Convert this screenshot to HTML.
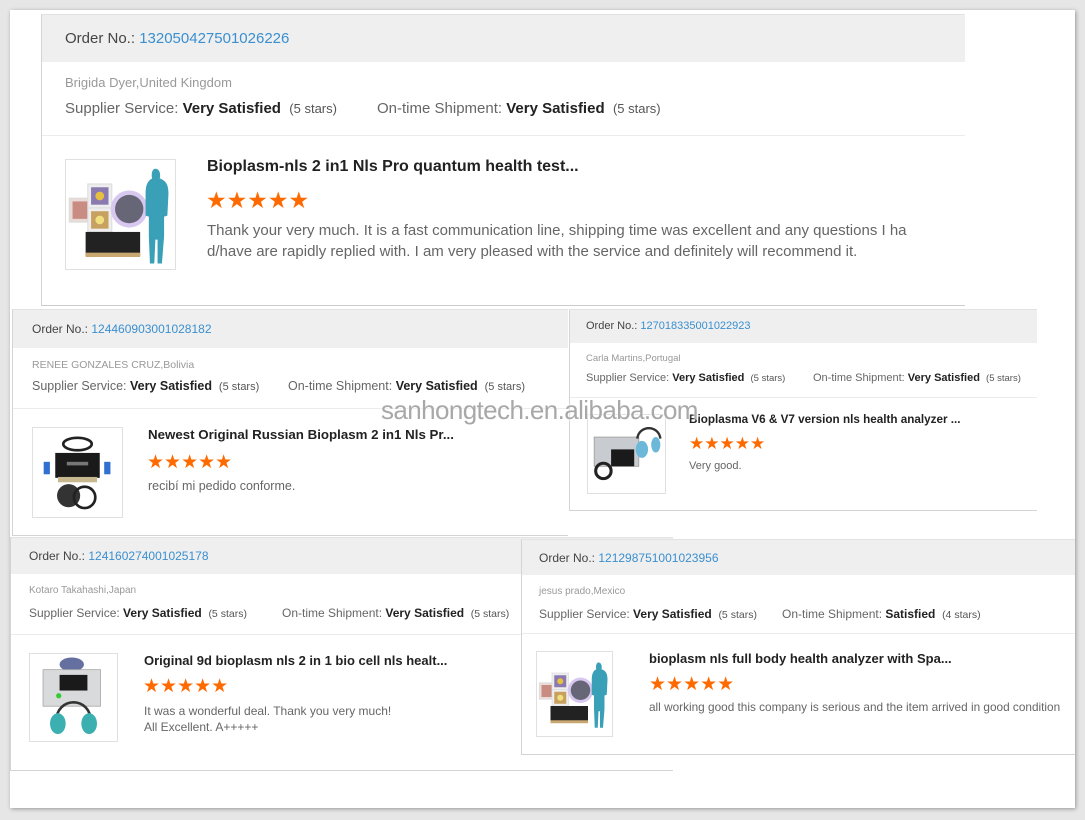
<!DOCTYPE html>
<html><head><meta charset="utf-8"><style>
*{margin:0;padding:0;box-sizing:border-box}
body{width:1085px;height:820px;background:#e6e6e6;position:relative;overflow:hidden;font-family:"Liberation Sans",Arial,sans-serif;color:#333}
.frame{position:absolute;left:10px;top:10px;width:1065px;height:798px;background:#fff;box-shadow:1px 1px 4px rgba(0,0,0,.35)}
.card{position:absolute;background:#fff;border-left:1px solid #d4d4d4;border-bottom:1px solid #d4d4d4;border-top:1px solid #e2e2e2}
.hd{position:absolute;left:0;right:0;top:0;background:#efefef;color:#444;white-space:nowrap}
.hd span{color:#3a8fd0}
.abs{position:absolute;white-space:nowrap}
.nm{color:#999}
.rt{color:#666}
.rt b{color:#222;font-weight:bold}
.rt i{font-style:normal;color:#555}
.dv{position:absolute;left:0;right:0;height:1px;background:#ececec}
.im{position:absolute;border:1px solid #e0e0e0;background:#fff;overflow:hidden}
.im svg{width:100%;height:100%;display:block}
.tt{font-weight:bold;color:#222}
.st{color:#ff6a00;letter-spacing:0px}
.tx{color:#666}
.wm{position:absolute;left:381px;top:395px;font-size:26px;color:#a8a8a8;text-shadow:0 0 2px #fff,0 0 2px #fff;white-space:nowrap;letter-spacing:-0.6px;z-index:10}
</style></head><body>
<div class="frame"></div>

<svg width="0" height="0" style="position:absolute">
<defs>
<symbol id="body" viewBox="0 0 100 100">
<rect x="3" y="35" width="22" height="22" fill="#e9dcd8" stroke="#ddd"/><rect x="6" y="38" width="16" height="16" fill="#c98c82"/>
<rect x="20" y="22" width="22" height="22" fill="#eee" stroke="#ddd"/><rect x="23" y="25" width="16" height="16" fill="#8a7ab0"/><circle cx="31" cy="33" r="4" fill="#e8c040"/>
<rect x="20" y="44" width="22" height="22" fill="#eee" stroke="#ddd"/><rect x="23" y="47" width="16" height="16" fill="#c8a060"/><circle cx="31" cy="55" r="4" fill="#f0e080"/>
<circle cx="58" cy="45" r="17" fill="#d8c8f0"/><circle cx="58" cy="45" r="13" fill="#667"/>
<rect x="18" y="66" width="50" height="22" fill="#222"/><rect x="18" y="85" width="50" height="4" fill="#c8a870"/>
<path d="M82 8c4 0 5 5 4 9 6 2 8 6 8 14l-1 20-3 1 0 18-2 25h-4l0-22-2 0-1 22h-4l-1-25v-18l-3-1 0-20c0-8 2-12 6-14-1-4 0-9 3-9z" fill="#3aa0b8"/>
</symbol>
<symbol id="dev" viewBox="0 0 100 100">
<ellipse cx="50" cy="18" rx="16" ry="7" fill="none" stroke="#222" stroke-width="3"/>
<rect x="25" y="28" width="50" height="28" fill="#1a1a1a"/><rect x="38" y="38" width="24" height="4" fill="#777"/>
<rect x="12" y="38" width="7" height="14" fill="#3070d0"/><rect x="80" y="38" width="7" height="14" fill="#3070d0"/>
<rect x="28" y="55" width="44" height="6" fill="#c8b890"/>
<circle cx="40" cy="76" r="13" fill="#333"/><circle cx="58" cy="78" r="12" fill="none" stroke="#222" stroke-width="3"/>
</symbol>
<symbol id="case" viewBox="0 0 100 100">
<rect x="8" y="28" width="58" height="38" fill="#c8ccd0" stroke="#999"/><rect x="30" y="44" width="30" height="22" fill="#1a1a1a"/>
<path d="M64 30c2-18 28-18 30 0" fill="none" stroke="#333" stroke-width="3"/><ellipse cx="70" cy="44" rx="8" ry="11" fill="#6cb8d8"/><ellipse cx="88" cy="38" rx="6" ry="10" fill="#6cb8d8"/>
<circle cx="20" cy="72" r="10" fill="none" stroke="#222" stroke-width="4"/>
</symbol>
<symbol id="case2" viewBox="0 0 100 100">
<ellipse cx="48" cy="12" rx="14" ry="8" fill="#6670a0"/>
<rect x="15" y="18" width="66" height="42" fill="#d8dadc" stroke="#aaa"/><rect x="34" y="24" width="32" height="18" fill="#1a1a1a"/><circle cx="33" cy="48" r="3" fill="#3c3"/>
<path d="M30 78c0-30 40-30 40 0" fill="none" stroke="#333" stroke-width="3"/><ellipse cx="32" cy="80" rx="9" ry="12" fill="#3cb0b0"/><ellipse cx="68" cy="80" rx="9" ry="12" fill="#3cb0b0"/>
</symbol>
</defs></svg>

<!-- card 1 -->
<div class="card" style="left:41px;top:14px;width:924px;height:292px;border-bottom-color:#ccc">
 <div class="hd" style="height:47px;font-size:15px;padding:15px 0 0 23px">Order No.: <span>132050427501026226</span></div>
 <div class="abs nm" style="left:23px;top:60px;font-size:13px">Brigida Dyer,United Kingdom</div>
 <div class="abs rt" style="left:23px;top:85px;font-size:15px">Supplier Service: <b>Very Satisfied</b> &nbsp;<i style="font-size:13px">(5 stars)</i></div>
 <div class="abs rt" style="left:335px;top:85px;font-size:15px">On-time Shipment: <b>Very Satisfied</b> &nbsp;<i style="font-size:13px">(5 stars)</i></div>
 <div class="dv" style="top:120px"></div>
 <div class="im" style="left:23px;top:144px;width:111px;height:111px"><svg><use href="#body"/></svg></div>
 <div class="abs tt" style="left:165px;top:143px;font-size:16px">Bioplasm-nls 2 in1 Nls Pro quantum health test...</div>
 <div class="abs st" style="left:164px;top:172px;font-size:23px">★★★★★</div>
 <div class="abs tx" style="left:165px;top:205px;font-size:15px;line-height:21px">Thank your very much. It is a fast communication line, shipping time was excellent and any questions I ha<br>d/have are rapidly replied with. I am very pleased with the service and definitely will recommend it.</div>
</div>

<!-- card 2 -->
<div class="card" style="left:12px;top:309px;width:556px;height:227px">
 <div class="hd" style="height:38px;font-size:12px;padding:12px 0 0 19px">Order No.: <span>124460903001028182</span></div>
 <div class="abs nm" style="left:19px;top:49px;font-size:10.5px">RENEE GONZALES CRUZ,Bolivia</div>
 <div class="abs rt" style="left:19px;top:69px;font-size:12.5px">Supplier Service: <b>Very Satisfied</b> &nbsp;<i style="font-size:11px">(5 stars)</i></div>
 <div class="abs rt" style="left:275px;top:69px;font-size:12.5px">On-time Shipment: <b>Very Satisfied</b> &nbsp;<i style="font-size:11px">(5 stars)</i></div>
 <div class="dv" style="top:98px"></div>
 <div class="im" style="left:19px;top:117px;width:91px;height:91px"><svg><use href="#dev"/></svg></div>
 <div class="abs tt" style="left:135px;top:117px;font-size:13.3px">Newest Original Russian Bioplasm 2 in1 Nls Pr...</div>
 <div class="abs st" style="left:134px;top:141px;font-size:19px">★★★★★</div>
 <div class="abs tx" style="left:135px;top:169px;font-size:12.5px">recibí mi pedido conforme.</div>
</div>

<!-- card 3 -->
<div class="card" style="left:569px;top:309px;width:468px;height:202px">
 <div class="hd" style="height:33px;font-size:11px;padding:10px 0 0 16px">Order No.: <span>127018335001022923</span></div>
 <div class="abs nm" style="left:16px;top:43px;font-size:9.5px">Carla Martins,Portugal</div>
 <div class="abs rt" style="left:16px;top:62px;font-size:11px">Supplier Service: <b>Very Satisfied</b> &nbsp;<i style="font-size:9.5px">(5 stars)</i></div>
 <div class="abs rt" style="left:243px;top:62px;font-size:11px">On-time Shipment: <b>Very Satisfied</b> &nbsp;<i style="font-size:9.5px">(5 stars)</i></div>
 <div class="dv" style="top:87px"></div>
 <div class="im" style="left:17px;top:104px;width:79px;height:80px"><svg><use href="#case"/></svg></div>
 <div class="abs tt" style="left:119px;top:103px;font-size:11.7px">Bioplasma V6 &amp; V7 version nls health analyzer ...</div>
 <div class="abs st" style="left:119px;top:124px;font-size:17px">★★★★★</div>
 <div class="abs tx" style="left:119px;top:150px;font-size:11px">Very good.</div>
</div>

<!-- card 4 -->
<div class="card" style="left:10px;top:537px;width:663px;height:234px">
 <div class="hd" style="height:36px;font-size:12px;padding:11px 0 0 18px">Order No.: <span>124160274001025178</span></div>
 <div class="abs nm" style="left:18px;top:47px;font-size:10px">Kotaro Takahashi,Japan</div>
 <div class="abs rt" style="left:18px;top:68px;font-size:12px">Supplier Service: <b>Very Satisfied</b> &nbsp;<i style="font-size:10.5px">(5 stars)</i></div>
 <div class="abs rt" style="left:271px;top:68px;font-size:12px">On-time Shipment: <b>Very Satisfied</b> &nbsp;<i style="font-size:10.5px">(5 stars)</i></div>
 <div class="dv" style="top:96px"></div>
 <div class="im" style="left:18px;top:115px;width:89px;height:89px"><svg><use href="#case2"/></svg></div>
 <div class="abs tt" style="left:133px;top:115px;font-size:13px">Original 9d bioplasm nls 2 in 1 bio cell nls healt...</div>
 <div class="abs st" style="left:132px;top:137px;font-size:19px">★★★★★</div>
 <div class="abs tx" style="left:133px;top:165px;font-size:12px;line-height:16px">It was a wonderful deal. Thank you very much!<br>All Excellent. A+++++</div>
</div>

<!-- card 5 -->
<div class="card" style="left:521px;top:539px;width:554px;height:216px">
 <div class="hd" style="height:35px;font-size:12px;padding:11px 0 0 17px">Order No.: <span>121298751001023956</span></div>
 <div class="abs nm" style="left:17px;top:46px;font-size:10px">jesus prado,Mexico</div>
 <div class="abs rt" style="left:17px;top:67px;font-size:12px">Supplier Service: <b>Very Satisfied</b> &nbsp;<i style="font-size:10.5px">(5 stars)</i></div>
 <div class="abs rt" style="left:260px;top:67px;font-size:12px">On-time Shipment: <b>Satisfied</b> &nbsp;<i style="font-size:10.5px">(4 stars)</i></div>
 <div class="dv" style="top:93px"></div>
 <div class="im" style="left:14px;top:111px;width:77px;height:86px"><svg><use href="#body"/></svg></div>
 <div class="abs tt" style="left:127px;top:111px;font-size:13px">bioplasm nls full body health analyzer with Spa...</div>
 <div class="abs st" style="left:127px;top:133px;font-size:19px">★★★★★</div>
 <div class="abs tx" style="left:127px;top:160px;font-size:11.8px">all working good this company is serious and the item arrived in good condition</div>
</div>

<div class="wm">sanhongtech.en.alibaba.com</div>
</body></html>
